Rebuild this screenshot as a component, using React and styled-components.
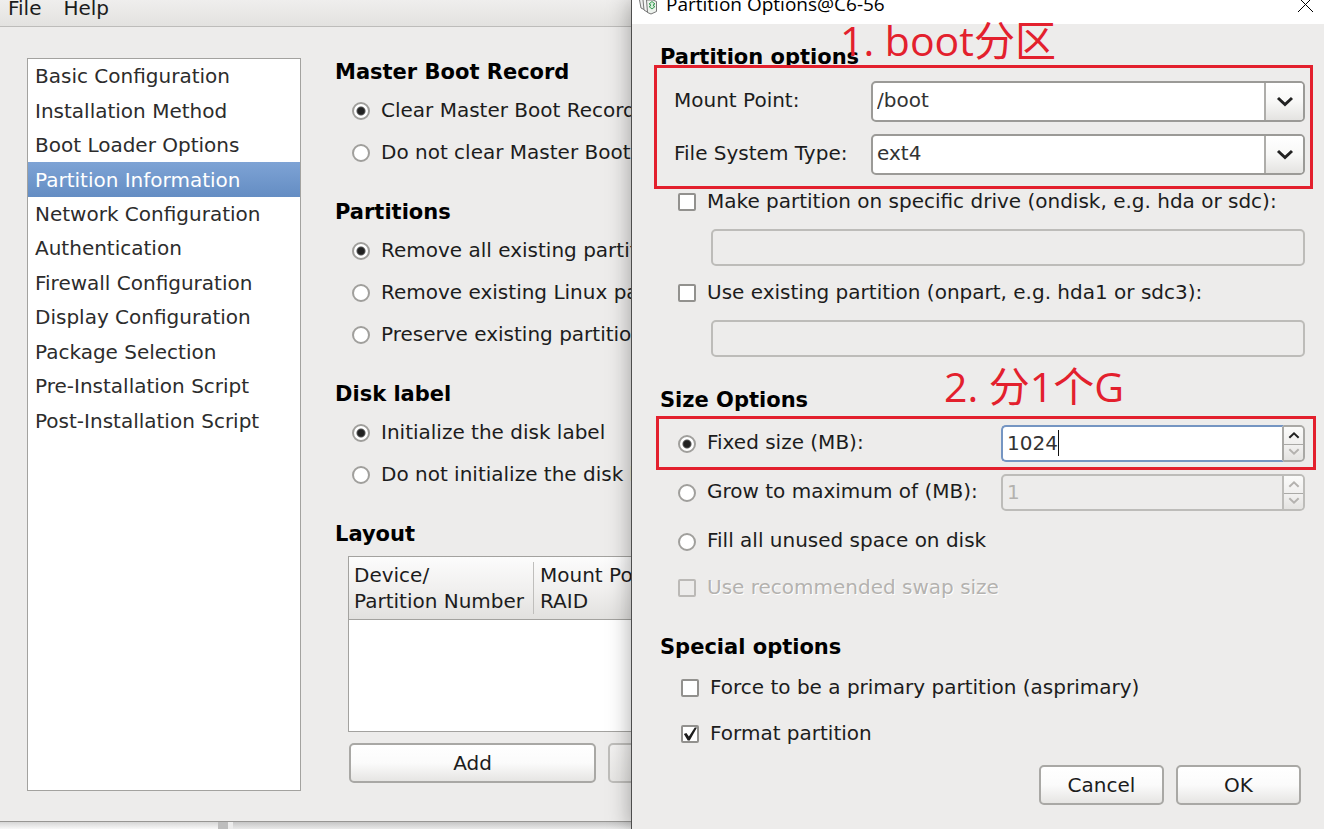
import React, { useState } from "react";
import styled, { createGlobalStyle, css } from "styled-components";

const pages = [
  "Basic Configuration",
  "Installation Method",
  "Boot Loader Options",
  "Partition Information",
  "Network Configuration",
  "Authentication",
  "Firewall Configuration",
  "Display Configuration",
  "Package Selection",
  "Pre-Installation Script",
  "Post-Installation Script",
];

const groups = [
  {
    name: "mbr",
    title: "Master Boot Record",
    options: ["Clear Master Boot Record", "Do not clear Master Boot Record"],
  },
  {
    name: "partitions",
    title: "Partitions",
    options: [
      "Remove all existing partitions",
      "Remove existing Linux partitions",
      "Preserve existing partitions",
    ],
  },
  {
    name: "disklabel",
    title: "Disk label",
    options: ["Initialize the disk label", "Do not initialize the disk label"],
  },
];

const GlobalStyle = createGlobalStyle`
  * {
    box-sizing: border-box;
  }

  body {
    margin: 0;
    background: #f4f4f4;
    color: #1c1c1c;
    font-family: "DejaVu Sans", sans-serif;
    font-size: 20px;
    line-height: 28px;
  }

  button, input, select {
    font: inherit;
    color: inherit;
    margin: 0;
  }
`;

const Desktop = styled.div`
  display: grid;
  grid-template-columns: minmax(0, 631fr) minmax(0, 693fr);
  min-height: 100vh;
  overflow: hidden;
`;

const Background = styled.div`
  display: flex;
  flex-direction: column;
  min-width: 0;
  overflow: hidden;
`;

const MainWindow = styled.div`
  flex: 1;
  display: flex;
  flex-direction: column;
  background: #edeceb;
  border-bottom: 1px solid #979694;
`;

const MenuBar = styled.nav`
  display: flex;
  gap: 22px;
  padding: 0 8px 10px;
  line-height: 16px;
  background: linear-gradient(#efeeed, #e3e2e0);
  border-bottom: 1px solid #bdbcba;
  white-space: nowrap;
`;

const MenuItem = styled.button`
  padding: 0;
  border: 0;
  background: none;
`;

const WindowContent = styled.div`
  flex: 1;
  display: flex;
  gap: 34px;
  padding: 31px 0 30px 27px;
`;

const PageList = styled.div`
  flex: 0 0 274px;
  background: #fff;
  border: 1px solid #a3a29f;
`;

const PageListRows = styled.ul`
  display: grid;
  grid-auto-rows: 1fr;
  height: 379px;
  margin: 0;
  padding: 0;
  list-style: none;
`;

const PageRow = styled.li`
  display: flex;
  align-items: center;
  padding: 0 7px;
  color: #2c2c2c;
  white-space: nowrap;
  ${(props) =>
    props.$selected &&
    css`
      color: #fff;
      background: linear-gradient(#7ea3d5, #648dc3);
    `}
`;

const Pane = styled.div`
  flex: 1;
  display: flex;
  flex-direction: column;
  min-width: 0;
  padding-bottom: 8px;
`;

const Heading = styled.h2`
  margin: 0;
  font-size: 21px;
  line-height: 28px;
  font-weight: bold;
  color: #000;
  white-space: nowrap;
`;

const Group = styled.section`
  display: flex;
  flex-direction: column;
  margin-bottom: 24px;

  ${Heading} {
    margin-bottom: 4px;
  }
`;

const Option = styled.label`
  display: flex;
  align-items: center;
  gap: 11px;
  height: ${(props) => props.$height || 28}px;
  margin-left: ${(props) => props.$indent || 0}px;
  white-space: nowrap;
  ${(props) =>
    props.$disabled &&
    css`
      color: #b4b2af;
      text-shadow: 1px 1px 0 #fff;
    `}
`;

const OptionText = styled.span`
  padding-bottom: 3px;
`;

const Radio = styled.input.attrs({ type: "radio" })`
  appearance: none;
  flex: none;
  width: 18px;
  height: 18px;
  border: 2px solid #a09f9c;
  border-radius: 50%;
  background: #fff;

  &:checked {
    background: radial-gradient(circle, #222 0 3px, #555 4px, #fff 5px);
  }
`;

const Checkbox = styled.input.attrs({ type: "checkbox" })`
  appearance: none;
  flex: none;
  display: grid;
  width: 18px;
  height: 18px;
  border: 2px solid #92918e;
  border-radius: 2px;
  background: #fff;

  &:checked::before {
    content: "";
    background: #1d1d1d;
    clip-path: polygon(6% 50%, 24% 42%, 42% 68%, 84% 4%, 100% 4%, 48% 96%, 34% 96%);
  }

  &:disabled {
    border-color: #bbb9b6;
    background: #edeceb;
  }
`;

const TableBox = styled.div`
  flex: 1;
  min-height: 176px;
  margin: 8px 0 11px 13px;
  background: #fff;
  border: 1px solid #a3a29f;
  border-right: 0;
  overflow: hidden;
`;

const Table = styled.table`
  border-collapse: collapse;
  line-height: 26px;
`;

const HeadRow = styled.tr`
  background: linear-gradient(#fcfcfc, #f1f0ef 50%, #e2e1df);
  border-bottom: 1px solid #a3a29f;
`;

const HeadCell = styled.th`
  padding: 5px 0 5px 5px;
  font-weight: normal;
  text-align: left;
  vertical-align: top;
  white-space: nowrap;

  & + & {
    padding-left: 0;
  }
`;

const HeadLabel = styled.span`
  display: block;
  min-width: ${(props) => props.$min}px;
  padding-right: 6px;
  border-right: 1px solid #bfbebc;

  ${HeadCell} + ${HeadCell} & {
    padding-left: 6px;
  }
`;

const PushButton = styled.button`
  flex: 0 0 ${(props) => props.$width}px;
  height: 40px;
  padding: 0;
  border: 2px solid #a9a8a5;
  border-radius: 5px;
  background: linear-gradient(#fff, #fbfbfb 50%, #e6e5e3);

  &:disabled {
    border-color: #bfbebb;
    background: linear-gradient(#f3f2f1, #e8e7e5);
  }
`;

const ButtonRow = styled.div`
  display: flex;
  gap: 12px;
  margin-left: 14px;
`;

const Shelf = styled.div`
  display: flex;
  height: 7px;
`;

const ShelfPart = styled.div`
  flex: ${(props) => props.$flex};
  background: ${(props) => props.$color};
`;

const Dialog = styled.div`
  position: relative;
  background: #edeceb;
  border-left: 1px solid #4d4d4d;
  box-shadow: 0 0 22px rgba(0, 0, 0, 0.34);
`;

const TitleBar = styled.header`
  display: flex;
  align-items: flex-start;
  height: 24px;
  padding: 0 10px 0 7px;
  background: #fff;
  color: #000;
  font-family: "Open Sans", "Noto Sans", sans-serif;
  font-size: 19px;
  line-height: 9px;
`;

const TitleText = styled.span`
  flex: 1;
  padding-left: 8px;
  white-space: nowrap;
`;

const CloseButton = styled.button`
  display: flex;
  padding: 0;
  border: 0;
  background: none;
`;

const DialogBody = styled.form`
  display: flex;
  flex-direction: column;
  padding: 19px 19px 24px 28px;
`;

const Titled = styled.div`
  position: relative;
  margin-top: ${(props) => props.$top || 0}px;
`;

const Note = styled.span`
  position: absolute;
  z-index: 1;
  left: ${(props) => props.$left}px;
  bottom: ${(props) => props.$bottom || 0}px;
  color: #e3202d;
  font-family: "Open Sans", "Noto Sans CJK SC", sans-serif;
  font-size: 41px;
  line-height: 56px;
  white-space: nowrap;
`;

// red frame drawn over a group of controls
const Framed = styled.div`
  position: relative;

  &::after {
    content: "";
    position: absolute;
    inset: ${(props) => props.$inset};
    border: 3px solid #e3202d;
    pointer-events: none;
  }
`;

const Fields = styled(Framed)`
  display: grid;
  grid-template-columns: 197px 1fr;
  align-items: center;
  gap: 12px 0;
  margin: 10px 0 13px 14px;
`;

const FieldLabel = styled.label`
  padding-bottom: 3px;
`;

const Combo = styled.div`
  display: grid;
  grid-template-columns: 1fr 39px;
  height: 41px;
  border: 2px solid #9b9a97;
  border-radius: 5px;
  background: #fff;
  overflow: hidden;
`;

const comboText = css`
  grid-area: 1 / 1;
  min-width: 0;
  padding: 0 4px 3px;
  border: 0;
  outline: 0;
  background: none;
  color: #333;
`;

const ComboInput = styled.input`
  ${comboText}
`;

const ComboSelect = styled.select`
  ${comboText}
  grid-column: 1 / 3;
  appearance: none;
`;

const ComboArrow = styled.button`
  grid-area: 1 / 2;
  display: grid;
  place-items: center;
  padding: 0;
  border: 0;
  border-left: 2px solid #aeadaa;
  background: linear-gradient(#fff, #f8f8f7 50%, #e4e3e1);
  pointer-events: ${(props) => (props.as ? "none" : "auto")};
`;

const TextInput = styled.input`
  height: 37px;
  margin: 13px 0 13px 51px;
  padding: 0 4px;
  border: 2px solid #bdbcb9;
  border-radius: 5px;
  background: #edeceb;
`;

const SizeRow = styled(Framed)`
  display: grid;
  grid-template-columns: 1fr 304px;
  margin-top: ${(props) => props.$top}px;

  &::after {
    display: ${(props) => (props.$inset ? "block" : "none")};
  }
`;

const Spin = styled.div`
  display: grid;
  grid-template-columns: 1fr 21px;
  height: 37px;
  color: ${(props) => (props.$disabled ? "#b4b2af" : "#333")};
`;

const SpinText = styled.div`
  display: flex;
  align-items: center;
  padding: 0 4px 2px;
  border: 2px solid ${(props) => (props.$disabled ? "#bdbcb9" : "#7595c2")};
  border-right-color: ${(props) => (props.$disabled ? "#bdbcb9" : "#a9a8a5")};
  border-radius: 5px 0 0 5px;
  background: ${(props) => (props.$disabled ? "#edeceb" : "#fff")};
`;

const SpinInput = styled.input`
  field-sizing: content;
  padding: 0;
  border: 0;
  outline: 0;
  background: none;
  caret-color: transparent;
`;

const Caret = styled.span`
  width: 1px;
  height: 26px;
  background: #111;
`;

const SpinButtons = styled.div`
  display: grid;
  grid-template-rows: 1fr 1fr;
  border: 2px solid ${(props) => (props.$disabled ? "#bdbcb9" : "#a9a8a5")};
  border-left: 0;
  border-radius: 0 5px 5px 0;
  overflow: hidden;
`;

const SpinButton = styled.button`
  display: grid;
  place-items: center;
  padding: 0;
  border: 0;
  background: linear-gradient(#fbfbfa, #f0efee);

  & + & {
    border-top: 1px solid #aaa9a6;
    background: linear-gradient(#f2f1f0, #e4e3e1);
  }
`;

const DialogButtons = styled.div`
  display: flex;
  justify-content: flex-end;
  gap: 12px;
  margin: 17px 4px 0 0;
`;

const Chevron = ({ up, small, faded }) => (
  <svg width={small ? 12 : 18} height={small ? 8 : 12} viewBox="0 0 18 12">
    <path
      d={up ? "M2 10 L9 3.5 L16 10" : "M2 2 L9 8.5 L16 2"}
      fill="none"
      stroke={faded ? "#b4b2af" : "#222"}
      strokeWidth="3"
    />
  </svg>
);

const AppIcon = () => (
  <svg width="19" height="15" viewBox="0 0 19 15">
    <path d="M0.5 0 L2 8 L6 10 V0" fill="#eee" stroke="#777" />
    <path d="M4 0 L5 10 L9 12.5 V0" fill="#f4f4f4" stroke="#777" />
    <path d="M7.500 0 L8.500 12.500 L12 14 L17.500 11.500 V1.500 L14 0 Z" fill="#edf2ed" stroke="#777" />
    <path d="M13 1.500 L16 4 L14.500 4.500 V6 L16 6.500 L13 9 L10 6.500 L11.500 6 V4.500 L10 4 Z" fill="#d5efda" stroke="#3b9a55" />
  </svg>
);

const SpinBox = ({ id, value, onChange, disabled, downDisabled, caret, label }) => (
  <Spin $disabled={disabled}>
    <SpinText $disabled={disabled}>
      <SpinInput
        id={id}
        aria-label={label}
        inputMode="numeric"
        value={value}
        disabled={disabled}
        onChange={(e) => onChange(Number(e.target.value) || 0)}
      />
      {caret && <Caret />}
    </SpinText>
    <SpinButtons $disabled={disabled}>
      <SpinButton type="button" aria-label="Increase" disabled={disabled} onClick={() => onChange(value + 1)}>
        <Chevron up small faded={disabled} />
      </SpinButton>
      <SpinButton type="button" aria-label="Decrease" disabled={disabled} onClick={() => onChange(value - 1)}>
        <Chevron small faded={disabled || downDisabled} />
      </SpinButton>
    </SpinButtons>
  </Spin>
);

const Configurator = () => {
  const [page, setPage] = useState(3);

  return (
    <Background>
      <MainWindow>
        <MenuBar>
          <MenuItem>File</MenuItem>
          <MenuItem>Help</MenuItem>
        </MenuBar>
        <WindowContent>
          <PageList>
            <PageListRows>
              {pages.map((name, i) => (
                <PageRow key={name} $selected={i === page} onClick={() => setPage(i)}>
                  {name}
                </PageRow>
              ))}
            </PageListRows>
          </PageList>
          <Pane>
            {groups.map((group) => (
              <Group key={group.name}>
                <Heading>{group.title}</Heading>
                {group.options.map((option, i) => (
                  <Option key={option} $height={42} $indent={17}>
                    <Radio name={group.name} defaultChecked={i === 0} />
                    <OptionText>{option}</OptionText>
                  </Option>
                ))}
              </Group>
            ))}
            <Heading>Layout</Heading>
            <TableBox>
              <Table>
                <thead>
                  <HeadRow>
                    <HeadCell>
                      <HeadLabel $min={180}>
                        Device/
                        <br />
                        Partition Number
                      </HeadLabel>
                    </HeadCell>
                    <HeadCell>
                      <HeadLabel $min={160}>
                        Mount Point/
                        <br />
                        RAID
                      </HeadLabel>
                    </HeadCell>
                  </HeadRow>
                </thead>
              </Table>
            </TableBox>
            <ButtonRow>
              <PushButton $width={247}>Add</PushButton>
              <PushButton $width={247} disabled aria-label="Edit" />
            </ButtonRow>
          </Pane>
        </WindowContent>
      </MainWindow>
      <Shelf>
        <ShelfPart $flex="0 0 218px" $color="linear-gradient(#d6d6d6, #f8f8f8)" />
        <ShelfPart $flex="0 0 10px" $color="#bdbdbd" />
        <ShelfPart $flex="0 0 5px" $color="#ececec" />
        <ShelfPart $flex="1" $color="linear-gradient(#c6c6c6, #e9e9e9)" />
      </Shelf>
    </Background>
  );
};

const PartitionDialog = () => {
  const [fixedSize, setFixedSize] = useState(1024);
  const [maxSize, setMaxSize] = useState(1);
  const [sizeMode, setSizeMode] = useState("fixed");

  return (
    <Dialog role="dialog" aria-label="Partition Options">
      <TitleBar>
        <AppIcon />
        <TitleText>Partition Options@C6-56</TitleText>
        <CloseButton aria-label="Close">
          <svg width="17" height="13" viewBox="0 0 17 13">
            <path d="M1 -3 L16 12 M16 -3 L1 12" stroke="#000" fill="none" />
          </svg>
        </CloseButton>
      </TitleBar>
      <DialogBody onSubmit={(e) => e.preventDefault()}>
        <Titled>
          <Heading>Partition options</Heading>
          <Note $left={180} $bottom={3}>
            1. boot分区
          </Note>
        </Titled>
        <Fields $inset="-16px -8px -14px -20px">
          <FieldLabel htmlFor="mount">Mount Point:</FieldLabel>
          <Combo>
            <ComboInput id="mount" defaultValue="/boot" />
            <ComboArrow type="button" aria-label="Show mount points">
              <Chevron />
            </ComboArrow>
          </Combo>
          <FieldLabel htmlFor="fstype">File System Type:</FieldLabel>
          <Combo>
            <ComboSelect id="fstype" defaultValue="ext4">
              <option>ext2</option>
              <option>ext3</option>
              <option>ext4</option>
              <option>swap</option>
            </ComboSelect>
            <ComboArrow as="span">
              <Chevron />
            </ComboArrow>
          </Combo>
        </Fields>

        <Option $indent={18}>
          <Checkbox />
          <OptionText>Make partition on specific drive (ondisk, e.g. hda or sdc):</OptionText>
        </Option>
        <TextInput aria-label="Drive" disabled />
        <Option $indent={18}>
          <Checkbox />
          <OptionText>Use existing partition (onpart, e.g. hda1 or sdc3):</OptionText>
        </Option>
        <TextInput aria-label="Existing partition" disabled />

        <Titled $top={16}>
          <Heading>Size Options</Heading>
          <Note $left={284}>2. 分1个G</Note>
        </Titled>
        <SizeRow $top={11} $inset="-9px -11px -8px -4px">
          <Option $indent={18} $height={37}>
            <Radio name="size" checked={sizeMode === "fixed"} onChange={() => setSizeMode("fixed")} />
            <OptionText>Fixed size (MB):</OptionText>
          </Option>
          <SpinBox id="fixed" label="Fixed size" value={fixedSize} onChange={setFixedSize} downDisabled caret />
        </SizeRow>
        <SizeRow $top={12}>
          <Option $indent={18} $height={37}>
            <Radio name="size" checked={sizeMode === "grow"} onChange={() => setSizeMode("grow")} />
            <OptionText>Grow to maximum of (MB):</OptionText>
          </Option>
          <SpinBox
            id="grow"
            label="Maximum size"
            value={maxSize}
            onChange={setMaxSize}
            disabled={sizeMode !== "grow"}
          />
        </SizeRow>
        <SizeRow $top={12}>
          <Option $indent={18} $height={37}>
            <Radio name="size" checked={sizeMode === "fill"} onChange={() => setSizeMode("fill")} />
            <OptionText>Fill all unused space on disk</OptionText>
          </Option>
        </SizeRow>
        <SizeRow $top={12}>
          <Option $indent={18} $height={32} $disabled>
            <Checkbox disabled />
            <OptionText>Use recommended swap size</OptionText>
          </Option>
        </SizeRow>

        <Titled $top={29}>
          <Heading>Special options</Heading>
        </Titled>
        <SizeRow $top={13}>
          <Option $indent={21}>
            <Checkbox />
            <OptionText>Force to be a primary partition (asprimary)</OptionText>
          </Option>
        </SizeRow>
        <SizeRow $top={18}>
          <Option $indent={21}>
            <Checkbox defaultChecked />
            <OptionText>Format partition</OptionText>
          </Option>
        </SizeRow>

        <DialogButtons>
          <PushButton type="button" $width={125}>
            Cancel
          </PushButton>
          <PushButton type="submit" $width={125}>
            OK
          </PushButton>
        </DialogButtons>
      </DialogBody>
    </Dialog>
  );
};

export default function App() {
  return (
    <>
      <GlobalStyle />
      <Desktop>
        <Configurator />
        <PartitionDialog />
      </Desktop>
    </>
  );
}
